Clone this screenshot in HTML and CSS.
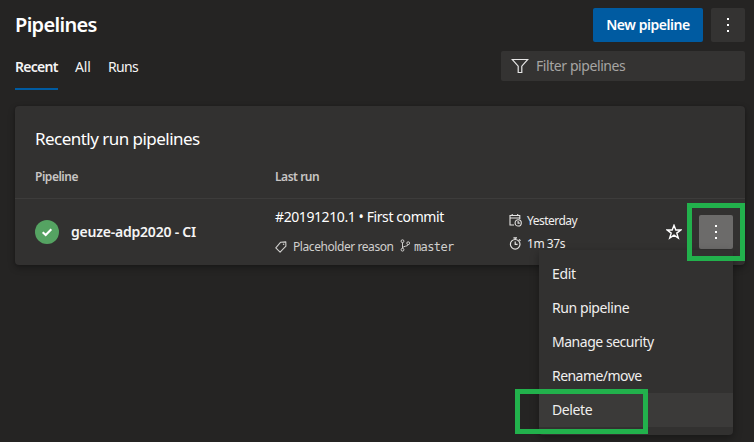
FILE: index.html
```
<!DOCTYPE html>
<html lang="en">
<head>
<meta charset="utf-8">
<title>Pipelines</title>
<link rel="stylesheet" href="styles.css">
</head>
<body>
<main class="page">
  <header class="header">
    <h1 class="title"><span class="t-title">Pipelines</span></h1>
    <button class="btn primary"><span class="t-new">New pipeline</span></button>
    <button class="btn more" aria-label="More"><i></i><i></i><i></i></button>
  </header>
  <div class="toolbar">
    <nav class="tabs">
      <a class="tab active"><span class="t-recent">Recent</span></a>
      <a class="tab"><span class="t-all">All</span></a>
      <a class="tab"><span class="t-runs">Runs</span></a>
    </nav>
    <div class="filter">
      <svg width="18" height="16" viewBox="0 0 18 16"><path d="M1.2 1.5H16.8L10.8 8.2V14.5H7.2V8.2Z" fill="none" stroke="#e6e6e6" stroke-width="1.2"/></svg>
      <span class="t-filter">Filter pipelines</span>
    </div>
  </div>
  <section class="card">
    <h2 class="card-title"><span class="t-card">Recently run pipelines</span></h2>
    <div class="row head">
      <div><span class="t-pipe">Pipeline</span></div>
      <div><span class="t-last">Last run</span></div>
    </div>
    <div class="row item">
      <div class="name">
        <svg width="24" height="24" viewBox="0 0 24 24"><circle cx="12" cy="12" r="12" fill="#55a362"/><path d="M7.7 12.2L10.7 15L16.3 9.2" fill="none" stroke="#fff" stroke-width="2.1"/></svg>
        <span class="t-name">geuze-adp2020 - CI</span>
      </div>
      <div class="run">
        <div class="commit"><span class="t-commit">#20191210.1 • First commit</span></div>
        <div class="meta">
          <svg class="tag" width="12" height="12" viewBox="0 0 12 12"><path d="M5.7 1.2L10.8 .9L10.9 5.2L5.1 11.2L.8 6.9Z" fill="none" stroke="#d0cfcd" stroke-width="1.1" stroke-linejoin="round"/><circle cx="8.6" cy="3.3" r=".8" fill="#d0cfcd"/></svg>
          <span class="reason"><span class="t-reason">Placeholder reason</span></span>
          <svg class="fork" width="11" height="13" viewBox="0 0 11 13"><g fill="none" stroke="#d0cfcd"><circle cx="2.5" cy="2.2" r="1.4"/><circle cx="2.5" cy="10.7" r="1.4"/><circle cx="8.2" cy="4.2" r="1.4"/><path d="M2.5 3.6V9.3M8.2 5.6C8.2 7.7 2.7 6.7 2.5 9"/></g></svg>
          <span class="branch">master</span>
        </div>
      </div>
      <div class="times">
        <div><svg width="13" height="13" viewBox="0 0 13 13"><g fill="none" stroke="#e4e3e2" stroke-width="1.1"><path d="M5 11H1V1.5H10.8V5M1 4H10.8M3.2 0V2M8.7 0V2"/><circle cx="9.2" cy="8.9" r="3.1"/><path d="M9.1 7V9.1H10.8"/></g></svg><span class="t-yest">Yesterday</span></div>
        <div><svg width="13" height="13" viewBox="0 0 13 13"><g fill="none" stroke="#e4e3e2" stroke-width="1.2"><circle cx="6.2" cy="7.3" r="4.8"/><path d="M4.4 .8H8M6.2 .8V2.4M10 2.4L11.5 3.8M6.2 4.5V7.4H8.6"/></g></svg><span class="t-dur">1m 37s</span></div>
      </div>
      <svg class="star" width="16" height="16" viewBox="0 0 16 16"><path d="M8 1.3L9.8 6H14.8L10.8 9.1L12.3 14.1L8 11.1L3.7 14.1L5.2 9.1L1.2 6H6.2Z" fill="none" stroke="#fff" stroke-width="1.4"/></svg>
      <div class="actions">
        <button class="btn more open" aria-label="More actions"><i></i><i></i><i></i></button>
        <div class="mark mark-more"></div>
        <div class="menu">
          <div class="option"><span class="t-edit">Edit</span></div>
          <div class="option"><span class="t-run">Run pipeline</span></div>
          <div class="option"><span class="t-sec">Manage security</span></div>
          <div class="option"><span class="t-ren">Rename/move</span></div>
          <div class="option hover"><span class="t-del">Delete</span><div class="mark mark-delete"></div></div>
        </div>
      </div>
    </div>
  </section>
</main>
</body>
</html>
```
FILE: styles.css
```
* { box-sizing: border-box; }
body {
  margin: 0;
  height: 442px;
  overflow: hidden;
  background: #252423;
  color: #f5f5f5;
  font: 14px/20px "Noto Sans", "Open Sans", sans-serif;
  white-space: nowrap;
}
.page { padding: 8px 9px 0 15px; }
svg { display: block; flex: none; }
.header { display: flex; gap: 8px; height: 34px; align-items: center; }
.title { flex: 1; margin: 0; font-size: 20px; font-weight: 600; line-height: 36px; color: #fff; }
.btn { height: 34px; border: 0; border-radius: 2px; padding: 0; font: inherit; color: #fff; }
.primary { width: 110px; background: #005ba1; font-weight: 600; }
.more { width: 34px; background: #343332; display: flex; flex-direction: column; gap: 4px; align-items: center; justify-content: center; }
.more i { width: 2px; height: 2px; background: #fff; }
.more.open { background: #6c6b6a; }
.toolbar { display: flex; justify-content: space-between; height: 64px; }
.tabs { display: flex; gap: 17px; padding-top: 3px; height: 48px; }
.tab { display: block; line-height: 44px; height: 45px; }
.active { width: 43px; font-weight: 600; border-bottom: 2px solid #005ba1; }
.filter { display: flex; align-items: center; gap: 7px; width: 244px; height: 30px; margin-top: 9px; padding-left: 10px; background: #343332; border-radius: 2px; color: #a6a5a3; }
.card { height: 159px; background: #323130; border-radius: 4px; box-shadow: 0 3px 7px rgba(0,0,0,.3), 0 0 2px rgba(0,0,0,.2); }
.card-title { margin: 0; padding: 20px 20px 0; height: 59px; font-size: 17px; font-weight: 400; line-height: 26px; color: #fff; }
.row { display: grid; grid-template-columns: 240px 234px 157px 33px 34px; padding-left: 20px; }
.head { height: 34px; font-size: 12px; font-weight: 600; line-height: 24px; color: #c8c6c4; border-bottom: 1px solid #3d3c3b; }
.item { height: 66px; align-items: center; }
.name { display: flex; align-items: center; gap: 12px; font-weight: 600; }
.run { height: 66px; padding-top: 8px; }
.commit { color: #fff; }
.meta { display: flex; align-items: center; height: 18px; margin-top: 11px; font-size: 12px; color: #d0cfcd; }
.reason { width: 101px; margin: 0 6px; }
.fork { margin-top: -3px; }
.branch { margin-left: 3px; font: 12px "DejaVu Sans Mono", monospace; letter-spacing: -.63px; }
.times { height: 66px; padding-top: 10px; font-size: 12px; color: #f0efee; }
.times div { display: flex; align-items: center; gap: 5px; height: 23px; }
.actions { position: relative; }
.menu { position: absolute; z-index: 1; top: 35px; right: 0; width: 194px; height: 185px; padding-top: 7px; background: #323130; border-radius: 0 0 4px 4px; box-shadow: 0 3px 9px rgba(0,0,0,.35); }
.option { position: relative; height: 34px; line-height: 34px; padding-left: 13px; color: #f0efee; }
.hover { background: #3b3a39; }
.mark { position: absolute; border: 5px solid #22b14c; }
.mark-more { z-index: 2; left: -12px; top: -12px; width: 58px; height: 58px; }
.mark-delete { left: -24px; top: -4px; width: 133px; height: 45px; }

.t-title { letter-spacing: -.67px; }
.t-recent { letter-spacing: -.7px; }
.t-all { letter-spacing: -.1px; }
.t-runs { letter-spacing: -.6px; }
.t-new { letter-spacing: -.45px; }
.t-filter { letter-spacing: -.42px; }
.t-card { letter-spacing: -.53px; }
.t-pipe, .t-last { letter-spacing: -.47px; }
.t-name { letter-spacing: -.22px; }
.t-commit { letter-spacing: -.41px; }
.t-reason { letter-spacing: -.43px; }
.t-yest { letter-spacing: -.52px; }
.t-dur { letter-spacing: -.45px; }
.t-edit { letter-spacing: -.35px; }
.t-run { letter-spacing: -.42px; }
.t-sec { letter-spacing: -.47px; }
.t-ren { letter-spacing: -.55px; }
.t-del { letter-spacing: -.4px; }
```
